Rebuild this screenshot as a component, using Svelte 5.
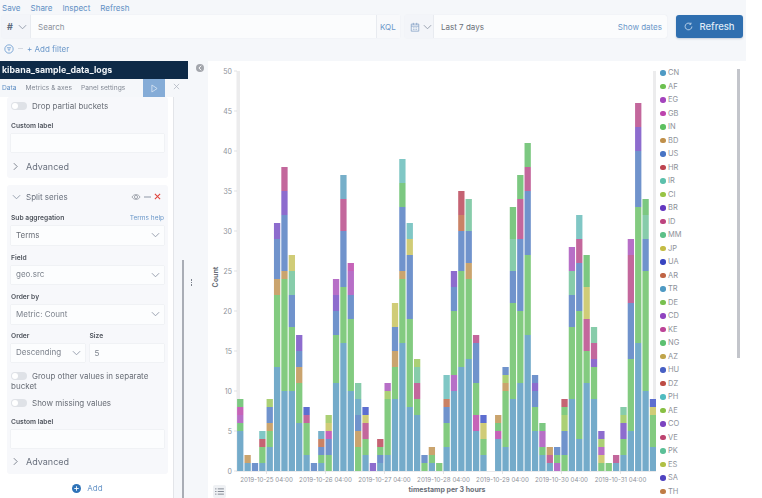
<script>
  const C = {
    a:'#74abca', b:'#83cb80', c:'#b76fc7', d:'#c663b8', e:'#7cc881', f:'#caa46e', g:'#7093cc', h:'#c56373',
    i:'#80c7c5', j:'#abd075', k:'#8d6cce', l:'#c3679c', m:'#87ccaa', n:'#d0cc77', o:'#5d6ed0', p:'#ca8265', q:'#76afc9'
  };
  const raw = [
    'a5 e1 c1 d1 e1','a1 f1','g1','a1 b2 h1 i1','a3 b2 f1 g2 j1','a13 b9 f2 g5 k2','a10 b14 f1 g7 k3 l3','a10 b8 g4 m3 n2',
    'a6 b5 f2 g2 k2','a2 b4 l1 o1','g1','a1 b1 g1 p1 q1','b2 g2 d1 n1 j1','a11 b6 g3 k2 c2','a16 b7 g7 l4 q3','a10 b9 g3 c3 d1',
    'b3 f2 g2 q2 m2','a2 b2 l2 n1 o1','k1','a1 g1 b1 h1','a2 b7 j1 c1','a9 b4 f2 g3 n3','a16 b8 f1 g8 e3 i3','a8 b11 g8 n2 i2',
    'a7 b2 l2 m2 j1','b1 g1','a1 b1 f1','b1','a3 b3 g2 p1 i3','a10 c2 b8 g3 k2','a13 b12 g5 p2 h3','a14 b10 f2 g4 m4',
    'a5 d2 b4 g5 l1','a2 b2 n2 o1','','a4 d1 e1 f1','a3 b7 f1 j1 g1','a9 b12 g4 m4 e4','a11 b9 g9 l5 e3','a17 b10 g8 l3 e3',
    'a5 b3 g2 k1 g1','a2 e1 c2 e1','a1 l1 f1','c1 b1 g1','b2 g3 j2 b1 h1','a9 b9 g4 m3 c3','a4 b16 g6 l3 i3','a11 b4 l4 n4 e4',
    'a9 b4 k1 l2 m2','b1 n1 c1 j1 k1','b1','a1 l1','a2 b2 k2 j1 m1','a5 b9 g7 l6 c2','a16 b17 g7 k3 l3','a10 b15 g4 m3 e2','a3 b4 n1 o1'
  ];
  const PX = 8, BASE = 410, X0 = 29.1, PITCH = 7.37, W = 6.3;
  const rects = [];
  raw.forEach((s, i) => {
    let v = 0;
    if (!s) return;
    for (const part of s.split(' ')) {
      const n = +part.slice(1);
      rects.push({ x: X0 + i * PITCH, y: BASE - (v + n) * PX, h: n * PX, fill: C[part[0]] });
      v += n;
    }
  });
  const yTicks = [0,5,10,15,20,25,30,35,40,45,50];
  const xTicks = ['25','26','27','28','29','30','31'].map((d, i) => ({ x: 58.5 + i * 59, t: `2019-10-${d} 04:00` }));
  const legend = [
    ['CN','#4f9ac4'],['AF','#6cc04f'],['EG','#a444bd'],['GB','#bd44ad'],['IN','#5cc060'],['BD','#c0904a'],['US','#4874c4'],['HR','#bd4450'],
    ['IR','#5cc0ac'],['CI','#98c444'],['BR','#6438c0'],['ID','#bd447f'],['MM','#5cc088'],['JP','#c4bc44'],['UA','#3844c0'],['AR','#c06444'],
    ['TR','#4f9ac4'],['DE','#78c04f'],['CD','#9044c0'],['KE','#bd4498'],['NG','#5cc070'],['AZ','#c0a44a'],['HU','#4860c4'],['DZ','#bd4c44'],
    ['PH','#50bcc0'],['AE','#88c044'],['CO','#7c44c0'],['VE','#bd4470'],['PK','#5cc098'],['ES','#b0c044'],['SA','#5044c0'],['TH','#c07c44']
  ];
</script>

{#snippet chev()}
  <svg class="chev" viewBox="0 0 10 6" width="9" height="6"><path d="M1 1l4 4 4-4" fill="none" stroke="currentColor" stroke-width="1"/></svg>
{/snippet}
{#snippet toggle()}
  <span class="toggle"><i></i></span>
{/snippet}
{#snippet select(text, cls)}
  <div class="select {cls}"><span>{text}</span>{@render chev()}</div>
{/snippet}
{#snippet advanced()}
  <div class="advanced">
    <svg viewBox="0 0 6 10" width="5" height="9"><path d="M1 1l4 4-4 4" fill="none" stroke="#69707d" stroke-width="1"/></svg>
    <span>Advanced</span>
  </div>
{/snippet}

<div class="page">
  <header class="top">
    <nav class="menu"><a>Save</a><a>Share</a><a>Inspect</a><a>Refresh</a></nav>
    <div class="query">
      <div class="searchbox">
        <div class="prefix"><b>#</b>{@render chev()}</div>
        <div class="search">Search</div>
        <div class="kql">KQL</div>
      </div>
      <div class="datebox">
        <div class="prefix cal">
          <svg viewBox="0 0 12 12" width="10" height="10"><path d="M1.5 2.5h9v8.5h-9zM1.5 5h9M4 1v2.5M8 1v2.5M3.5 7h1M5.500 7h1M7.500 7h1M3.500 9h1M5.500 9h1M7.500 9h1" fill="none" stroke="#7f9fc4" stroke-width=".9"/></svg>
          {@render chev()}
        </div>
        <div class="range">Last 7 days</div>
        <a class="show">Show dates</a>
      </div>
      <button class="refresh">
        <svg viewBox="0 0 12 12" width="9" height="9"><path d="M10.500 6a4.500 4.500 0 1 1-1.500-3.400M9.300 .8v2.200H7" fill="none" stroke="#cfe0f2" stroke-width="1.100"/></svg>
        Refresh
      </button>
    </div>
    <div class="filters">
      <svg viewBox="0 0 12 12" width="10" height="10"><circle cx="6" cy="6" r="5" fill="none" stroke="#6b9bd0"/><path d="M3.500 4.500h5M4.500 6.300h3M5.300 8h1.400" stroke="#6b9bd0" fill="none"/></svg>
      <span class="dash"></span>
      <a>+ Add filter</a>
    </div>
  </header>

  <main class="main">
    <aside class="side">
      <div class="title">kibana_sample_data_logs</div>
      <div class="tabs">
        <span class="tab active">Data</span>
        <span class="tab">Metrics &amp; axes</span>
        <span class="tab">Panel settings</span>
        <span class="run"><svg viewBox="0 0 8 10" width="7" height="9"><path d="M1 1l6 4-6 4z" fill="none" stroke="#dce8f5" stroke-width=".9"/></svg></span>
        <span class="close"><svg viewBox="0 0 8 8" width="7" height="7"><path d="M1 1l6 6M7 1l-6 6" stroke="#a9afba" stroke-width=".8"/></svg></span>
      </div>
      <div class="scrollarea">
        <div class="pane">
          <section class="card first">
            <label class="switch">{@render toggle()}Drop partial buckets</label>
            <div class="lab cl1">Custom label</div>
            <div class="input"></div>
            {@render advanced()}
          </section>
          <section class="card second">
            <div class="split">
              {@render chev()}
              <span class="name">Split series</span>
              <span class="icons">
                <svg viewBox="0 0 12 10" width="10" height="8"><path d="M1 5c2-4 8-4 10 0-2 4-8 4-10 0z" fill="none" stroke="#8a9099" stroke-width=".9"/><circle cx="6" cy="5" r="2" fill="none" stroke="#8a9099" stroke-width=".9"/></svg>
                <svg viewBox="0 0 8 4" width="7" height="4"><path d="M0 2h8" stroke="#a9afba" stroke-width="1.500"/></svg>
                <svg class="del" viewBox="0 0 8 8" width="7" height="7"><path d="M1 1l6 6M7 1l-6 6" fill="none" stroke="#e0443c" stroke-width="1.200"/></svg>
              </span>
            </div>
            <div class="lab row s1"><span>Sub aggregation</span><a>Terms help</a></div>
            {@render select('Terms', 'dark')}
            <div class="lab s2">Field</div>
            {@render select('geo.src', '')}
            <div class="lab s2">Order by</div>
            {@render select('Metric: Count', '')}
            <div class="pair">
              <div class="col1"><div class="lab">Order</div>{@render select('Descending', 'slim')}</div>
              <div class="col2"><div class="lab">Size</div><div class="input slim val">5</div></div>
            </div>
            <label class="switch wrap">{@render toggle()}Group other values in separate bucket</label>
            <label class="switch missing">{@render toggle()}Show missing values</label>
            <div class="lab cl2">Custom label</div>
            <div class="input"></div>
            {@render advanced()}
          </section>
          <div class="add">
            <svg viewBox="0 0 10 10" width="9" height="9"><circle cx="5" cy="5" r="5" fill="#2f73b8"/><path d="M2.500 5h5M5 2.500v5" stroke="#fff" stroke-width="1"/></svg>
            <span>Add</span>
          </div>
        </div>
        <div class="gutter"><span class="thumb"></span></div>
      </div>
    </aside>

    <div class="divider">
      <span class="collapse"><svg viewBox="0 0 8 8" width="6" height="6"><path d="M5.500 1L2.500 4l3 3" fill="none" stroke="#fff" stroke-width="1.300"/></svg></span>
      <span class="dots"><i></i><i></i><i></i></span>
    </div>

    <div class="viz">
      <div class="plot">
        <svg class="chart" viewBox="0 0 448 437" width="448" height="437">
          <rect x="28.500" y="10" width="3.500" height="400" fill="#ececed"/>
          <rect x="445" y="10" width="3" height="400" fill="#ececed"/>
          {#each yTicks as v}
            <text class="tick" x="24" y={BASE - v * PX + 3} text-anchor="end">{v}</text>
            <path d={`M26 ${BASE - v * PX}h3`} stroke="#d5d7da" stroke-width=".7"/>
          {/each}
          {#each rects as r}
            <rect x={r.x} y={r.y} width={W} height={r.h} fill={r.fill}/>
          {/each}
          <path d="M28 410.500h420" stroke="#e4e5e7" stroke-width=".8"/>
          {#each xTicks as t}
            <path d={`M${t.x} 410v3`} stroke="#d5d7da" stroke-width=".7"/>
            <text class="tick date" x={t.x} y="421" text-anchor="middle">{t.t}</text>
          {/each}
          <text class="axis" x="239" y="431" text-anchor="middle">timestamp per 3 hours</text>
          <text class="axis" transform="translate(9.500 216) rotate(-90)" text-anchor="middle">Count</text>
        </svg>
        <button class="listbtn">
          <svg viewBox="0 0 10 8" width="9" height="7"><path d="M0 1h1.500M3 1h7M0 4h1.500M3 4h7M0 7h1.500M3 7h7" stroke="#69707d" stroke-width=".9"/></svg>
        </button>
      </div>
      <ul class="legend">
        {#each legend as [name, color]}
          <li><span class="dot" style:background={color}></span>{name}</li>
        {/each}
      </ul>
      <span class="legendbar"></span>
    </div>
    <div class="rest"></div>
  </main>
</div>

<style>
  :global(body) { margin: 0; background: #fff; }
  .page {
    width: 762px; height: 498px; overflow: hidden; display: flex; flex-direction: column;
    font-family: Inter, "Liberation Sans", sans-serif; color: #5a606b; filter: blur(.45px);
  }
  a { color: #6a97c9; }
  .top { height: 61px; width: 746px; background: #f5f7fa; flex: none; box-sizing: border-box; padding: 0 3px 0 2px; }
  .menu { display: flex; gap: 10px; height: 15px; align-items: center; font-size: 8px; }
  .menu a { color: #5f8fc4; }
  .query { display: flex; height: 23px; gap: 5px; }
  .searchbox, .datebox {
    display: flex; align-items: center; background: #fbfcfd; border-radius: 2px;
    box-shadow: 0 0 1px 0 #d8dde6; font-size: 8px;
  }
  .searchbox { width: 398px; }
  .datebox { width: 262px; }
  .prefix {
    height: 100%; display: flex; align-items: center; gap: 5px; background: #f3f5f9; color: #7f8a9c;
    box-sizing: border-box; border-right: 1px solid #e8ebf0; width: 29px; padding-left: 5px; flex: none;
  }
  .prefix b { font-size: 9px; color: #5f6b7c; }
  .prefix.cal { padding-left: 5px; gap: 3px; }
  .chev { color: #8f99a8; flex: none; }
  .search { flex: 1; padding-left: 7px; color: #8b919b; }
  .kql { width: 24px; height: 100%; display: flex; align-items: center; padding-left: 3px; box-sizing: border-box; color: #6a97c9; border-left: 1px solid #e8ebf0; background: #f8f9fb; }
  .range { flex: 1; padding-left: 7px; color: #6a6f78; }
  .show { padding-right: 5px; }
  .refresh {
    margin-left: 4px; width: 67px; border: 0; background: #2f6fb0; border-radius: 3px; color: #dfeaf6;
    font: 500 9.500px Inter, sans-serif; display: flex; align-items: center; justify-content: center; gap: 6px; padding: 0;
    box-shadow: 0 1px 2px #c4cedb;
  }
  .filters { display: flex; align-items: center; height: 21px; padding: 0 1px 0 2px; gap: 2px; font-size: 8px; }
  .filters a { color: #6a97c9; }
  .dash { width: 5px; height: 1px; background: #d4d9e0; margin: 0 2px 0 2px; }

  .main { flex: 1; display: flex; min-height: 0; }
  .side { width: 188px; flex: none; background: #f5f7fa; display: flex; flex-direction: column; }
  .title {
    height: 18px; background: #0e2a47; color: #eef2f6; font-size: 8.800px; font-weight: 700; line-height: 18px;
    padding-left: 2px; flex: none;
  }
  .tabs { height: 18px; display: flex; align-items: center; font-size: 6.700px; color: #848a95; position: relative; flex: none; padding-left: 2px; gap: 9px; }
  .tab.active { color: #5f8fc4; }
  .run { position: absolute; left: 143px; top: 0; width: 22px; height: 18px; background: #85acd7; display: flex; align-items: center; justify-content: center; }
  .close { position: absolute; left: 173px; top: 4px; }
  .scrollarea { flex: 1; display: flex; min-height: 0; }
  .pane { width: 174px; background: #fff; box-sizing: border-box; padding: 0 5px 0 7px; border-right: 1px solid #e3e5e9; flex: none; }
  .gutter { flex: 1; position: relative; }
  .thumb { position: absolute; left: 8px; top: 163px; width: 2px; height: 240px; background: #a9adb5; }
  .card { background: #f7f8fb; border-radius: 3px; box-sizing: border-box; padding: 0 4px; }
  .card.first { height: 81px; margin-bottom: 7px; }
  .card.second { height: 289px; }
  .switch { display: block; font-size: 8px; color: #686d76; line-height: 11px; }
  .first .switch { padding-top: 4px; }
  .toggle { display: inline-block; width: 16px; height: 8px; border-radius: 4px; background: #dfe2e7; position: relative; vertical-align: -1px; margin-right: 5px; }
  .toggle i { position: absolute; left: 1px; top: 1px; width: 6px; height: 6px; border-radius: 50%; background: #fff; }
  .lab { font-size: 6.700px; font-weight: 600; color: #4e535c; line-height: 8px; margin-bottom: 4px; }
  .cl1 { margin-top: 10px; }
  .input { height: 18px; background: #fcfdfe; box-shadow: 0 0 1px #cfd4dc; box-sizing: border-box; }
  .advanced { display: flex; align-items: center; gap: 8px; height: 14px; margin-top: 7px; padding-left: 2px; font-size: 9px; color: #69707d; }
  .split { display: flex; align-items: center; height: 11px; padding-top: 6px; gap: 5px; font-size: 8px; color: #69707d; padding-left: 1px; }
  .split .icons { margin-left: auto; display: flex; align-items: center; gap: 3px; margin-right: 3px; }
  .row { display: flex; justify-content: space-between; align-items: center; }
  .row a { font-weight: 400; font-size: 6.500px; color: #6a97c9; }
  .s1 { margin-top: 12px; }
  .s2 { margin-top: 9px; }
  .select { height: 18.500px; background: #fcfdfe; box-shadow: 0 0 1px #cfd4dc; display: flex; align-items: center; justify-content: space-between; padding: 0 4px 0 5px; font-size: 8px; color: #7c828c; box-sizing: border-box; }
  .select span { position: relative; top: -.5px; }
  .select.dark { color: #6a6f78; }
  .pair { display: flex; gap: 5px; margin-top: 8px; }
  .col1 { width: 74px; }
  .col2 { width: 75px; }
  .slim { height: 18px; }
  .val { font-size: 8px; color: #7c828c; padding: 0 5px; display: flex; align-items: center; }
  .wrap { margin-top: 9px; line-height: 10.500px; }
  .missing { margin-top: 6px; }
  .cl2 { margin-top: 9px; }
  .add { display: flex; align-items: center; justify-content: center; gap: 6px; height: 14px; margin-top: 7px; font-size: 8px; color: #6a97c9; }

  .divider { width: 20px; flex: none; background: #f5f7fa; position: relative; }
  .collapse { position: absolute; left: 8px; top: 3px; width: 8px; height: 8px; border-radius: 50%; background: #a3a6ac; display: flex; align-items: center; justify-content: center; }
  .dots { position: absolute; left: 2.500px; top: 218px; display: flex; flex-direction: column; gap: 1px; }
  .dots i { width: 1.500px; height: 1.500px; background: #7c828c; }

  .viz { width: 538px; flex: none; background: #fff; position: relative; display: flex; }
  .plot { width: 448px; flex: none; position: relative; }
  .chart { display: block; }
  .tick { font-size: 7px; fill: #8e929a; font-family: Inter, sans-serif; }
  .date { font-size: 6.200px; }
  .axis { font-size: 7px; font-weight: 700; fill: #6a6f78; font-family: Inter, sans-serif; }
  .listbtn { position: absolute; left: 5px; top: 424px; width: 13px; height: 13px; border: 0; padding: 0; background: #eff1f4; border-radius: 2px; display: flex; align-items: center; justify-content: center; }
  .legend { list-style: none; margin: 5px 0 0 4px; padding: 0; display: flex; flex-direction: column; }
  .legend li { height: 13.570px; display: flex; align-items: center; gap: 2.500px; font-size: 7.500px; color: #8e929a; }
  .dot { width: 5.500px; height: 5.500px; border-radius: 50%; flex: none; }
  .legendbar { position: absolute; left: 529px; top: 8px; width: 2.500px; height: 289px; background: #c3c5cb; }
  .rest { flex: 1; background: #fff; }
</style>
